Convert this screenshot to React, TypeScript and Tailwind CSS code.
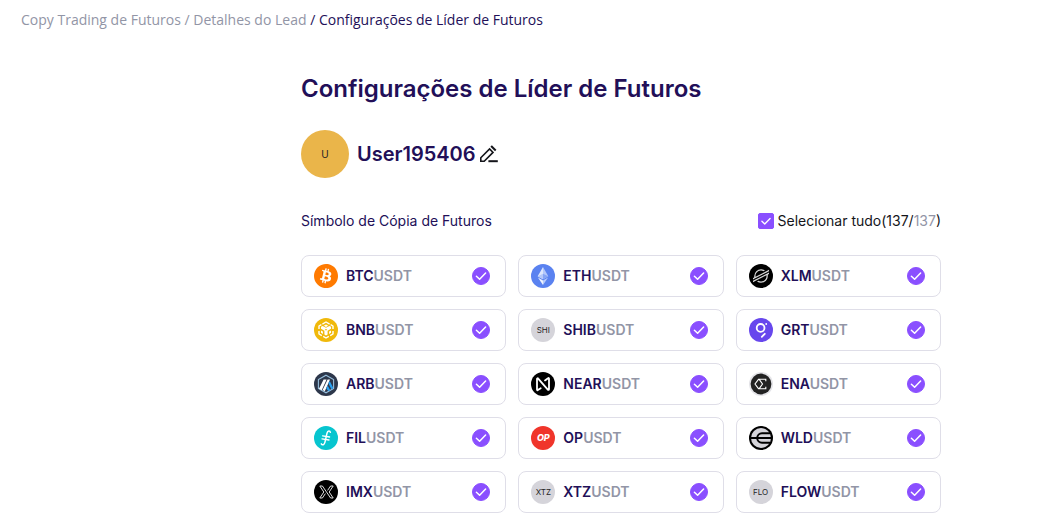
import React from "react";
import { SiBitcoin, SiStellar } from "react-icons/si";

interface CoinCardProps {
  base: string;
  icon: React.ReactNode;
}

interface DiscProps {
  color: string;
  children?: React.ReactNode;
}

function Disc({ color, children }: DiscProps) {
  return (
    <svg viewBox="0 0 24 24" className="size-6 shrink-0" fill="none" aria-hidden="true">
      <circle cx="12" cy="12" r="12" fill={color} />
      {children}
    </svg>
  );
}

// Coins without a logo show their first three letters
function TextDisc({ text }: { text: string }) {
  return (
    <span className="flex size-6 shrink-0 items-center justify-center rounded-full bg-[#d5d4da] text-[8px] text-[#1f1f26]">
      {text}
    </span>
  );
}

function BtcIcon() {
  return <SiBitcoin className="size-6 shrink-0 text-[#ff7a00]" />;
}

function EthIcon() {
  return (
    <Disc color="#5a82f0">
      <path d="M12 3 6.7 12.2 12 15.2Z" fill="#dce6fd" />
      <path d="M12 3 17.3 12.2 12 15.2Z" fill="#b4c8fa" />
      <path d="M12 9.8 6.7 12.2 12 15.2Z" fill="#b4c8fa" />
      <path d="M12 9.8 17.3 12.2 12 15.2Z" fill="#85a4f5" />
      <path d="M6.9 13.6 12 16.6V21Z" fill="#eef3fe" />
      <path d="M17.1 13.6 12 16.6V21Z" fill="#b9ccfa" />
    </Disc>
  );
}

function XlmIcon() {
  return (
    <span className="flex size-6 shrink-0 items-center justify-center rounded-full bg-black">
      <SiStellar className="size-4 text-[#d9d9d9]" />
    </span>
  );
}

function BnbIcon() {
  return (
    <Disc color="#f0b90b">
      <g stroke="#fff" strokeWidth="1.4" strokeLinejoin="round">
        <path d="m8.4 6.1 3.6-2.1 3.6 2.1M5 11V8l2.4-1.4M19 11V8l-2.4-1.4M5 13v3l2.8 1.6M19 13v3l-2.8 1.6M9.2 18.4l2.8 1.6 2.8-1.6" />
      </g>
      <path
        d="m12 6.4 2.2 1.3-2.2 1.2-2.2-1.2ZM7 8.8l1.6-.9L12 9.8l3.4-1.9 1.6.9v1.9l-3.4 2v3.8L12 17.5l-1.6-1v-3.8L7 10.7ZM7 12.4l1.9 1.1v2.4L7 14.8ZM17 12.4l-1.9 1.1v2.4l1.9-1.1Z"
        fill="#fff"
      />
      <path d="m12 11 1.3.8-1.3.8-1.3-.8Z" fill="#f0b90b" />
    </Disc>
  );
}

function GrtIcon() {
  return (
    <Disc color="#6747ed">
      <circle cx="11.6" cy="9.9" r="3.9" stroke="#fff" strokeWidth="1.8" />
      <path d="m15.8 15.8-3 3" stroke="#fff" strokeWidth="1.8" strokeLinecap="round" />
      <circle cx="17.2" cy="6" r=".9" fill="#fff" />
    </Disc>
  );
}

function ArbIcon() {
  return (
    <Disc color="#2d374b">
      <path d="m12 3.2 7.6 4.4v8.8L12 20.8l-7.6-4.4V7.6Z" stroke="#96bedc" strokeWidth="1.1" />
      <path d="M9.6 7.6h3L7.7 18.3 5 16.7ZM13.6 7.6h2.4L10.8 19.2l-2.2-1.1Z" fill="#fff" />
      <path d="m14.4 11.6 1.3-2.6 3.6 7.1-1.9 1.2ZM12.2 16.4l1.4-3 2.7 4.8-2 .9Z" fill="#28a0f0" />
    </Disc>
  );
}

function NearIcon() {
  return (
    <Disc color="#000">
      <path
        d="M9.7 16.2 6.9 18.1c-.5.3-.9 0-.9-.6V6.9c0-.7.8-.9 1.2-.3l9.6 11c.5.5 1.2.2 1.2-.4V6.6c0-.6-.5-.8-1-.4l-3 2.2"
        stroke="#fff"
        strokeWidth="1.8"
        strokeLinecap="round"
      />
    </Disc>
  );
}

function EnaIcon() {
  return (
    <Disc color="#e4e4e8">
      <circle cx="12" cy="12" r="10.4" fill="#222" />
      <path
        d="M16.8 9.2V7.3H9.5L6 12l3.5 4.7h7.3v-1.9M10.2 7.4l3.3 4.6-3.3 4.6"
        stroke="#fff"
        strokeWidth="1.1"
      />
    </Disc>
  );
}

function FilIcon() {
  return (
    <Disc color="#07c5cf">
      <path
        d="M16.4 6.3c-.4-1.8-2.6-2.2-3.4.9l-2.1 9.2c-.6 2.5-2.6 3.2-3.6 1.4"
        stroke="#fff"
        strokeWidth="1.5"
        strokeLinecap="round"
      />
      <path d="m8.6 9.8 7 1.2M8 12.8l7 1.2" stroke="#fff" strokeWidth="1.3" strokeLinecap="round" />
    </Disc>
  );
}

function OpIcon() {
  return (
    <span className="flex size-6 shrink-0 items-center justify-center rounded-full bg-[#f0352b] text-[9px] font-extrabold text-white italic">
      OP
    </span>
  );
}

function WldIcon() {
  return (
    <Disc color="#000">
      <circle cx="12" cy="12" r="10" fill="#d5d4da" />
      <path
        d="M21.4 7.2H13a4.8 4.8 0 0 0 0 9.6h8.4M2 12h20"
        stroke="#000"
        strokeWidth="2"
      />
    </Disc>
  );
}

function ImxIcon() {
  return (
    <Disc color="#000">
      <g stroke="#dcdcdc" strokeWidth="1">
        <path d="M5.8 6h2.6l8.2 12h2.6" />
        <path d="m5.8 6 4 6-4 6h2.6l3-4.4M19.2 18l-4-6 4-6h-2.6l-3 4.4" />
      </g>
    </Disc>
  );
}

const coins: CoinCardProps[] = [
  { base: "BTC", icon: <BtcIcon /> },
  { base: "ETH", icon: <EthIcon /> },
  { base: "XLM", icon: <XlmIcon /> },
  { base: "BNB", icon: <BnbIcon /> },
  { base: "SHIB", icon: <TextDisc text="SHI" /> },
  { base: "GRT", icon: <GrtIcon /> },
  { base: "ARB", icon: <ArbIcon /> },
  { base: "NEAR", icon: <NearIcon /> },
  { base: "ENA", icon: <EnaIcon /> },
  { base: "FIL", icon: <FilIcon /> },
  { base: "OP", icon: <OpIcon /> },
  { base: "WLD", icon: <WldIcon /> },
  { base: "IMX", icon: <ImxIcon /> },
  { base: "XTZ", icon: <TextDisc text="XTZ" /> },
  { base: "FLOW", icon: <TextDisc text="FLO" /> },
];

function Check({ className = "" }: { className?: string }) {
  return (
    <svg
      viewBox="0 0 18 18"
      className={`pointer-events-none col-start-1 row-start-1 ${className}`}
      fill="none"
      stroke="#fff"
      strokeWidth="1.5"
      strokeLinecap="round"
      strokeLinejoin="round"
      aria-hidden="true"
    >
      <path d="m4.4 9.2 3.2 3.1 6-6.2" />
    </svg>
  );
}

function CoinCard({ base, icon }: CoinCardProps) {
  return (
    <label className="flex h-[42px] cursor-pointer items-center gap-2 rounded-lg border border-[#dfdee8] pr-[15px] pl-3">
      {icon}
      <span className="flex-1 text-sm font-semibold text-[#220f58]">
        {base}
        <span className="text-[#9295a6]">USDT</span>
      </span>
      <span className="grid">
        <input
          type="checkbox"
          defaultChecked
          className="col-start-1 row-start-1 size-[18px] appearance-none rounded-full border border-[#8a4fff] checked:bg-[#8a4fff]"
        />
        <Check className="size-[18px]" />
      </span>
    </label>
  );
}

export default function App() {
  return (
    <div className="min-h-screen bg-white pb-2 font-['Inter',sans-serif] text-[#220f58]">
      <nav className="px-[21px] pt-[10px] font-['Open_Sans',sans-serif] text-sm text-[#9295a6]">
        <a href="#copy">Copy Trading de Futuros</a> / <a href="#lead">Detalhes do Lead</a>{" "}
        <span className="text-[#220f58]">/ Configurações de Líder de Futuros</span>
      </nav>

      <main className="pt-[43px] pr-[114px] pl-[301px]">
        <h1 className="text-2xl font-semibold">Configurações de Líder de Futuros</h1>

        <div className="mt-[25px] flex items-center">
          <div className="flex size-12 items-center justify-center rounded-full bg-[#eab54a] text-[10px] text-[#1f1f26]">
            U
          </div>
          <h2 className="ml-2 text-xl font-semibold">User195406</h2>
          <button aria-label="Editar nome" className="cursor-pointer">
            <svg viewBox="0 0 24 24" className="size-6" fill="none" stroke="#14151a" strokeWidth="1.6">
              <path d="M4.8 19.2v-3.4L13.6 7l3.4 3.4-8.8 8.8Z" />
              <path d="m14.4 4.7 1.5-1.4 4.5 4.5-1.4 1.4Z" fill="#14151a" stroke="none" />
              <path d="M12.4 19.2h9.4" strokeWidth="2" />
            </svg>
          </button>
        </div>

        <div className="mt-[33px] flex items-center justify-between">
          <h3 className="text-sm">Símbolo de Cópia de Futuros</h3>
          <label className="flex cursor-pointer items-center gap-1 text-sm text-[#14151a]">
            <span className="grid">
              <input
                type="checkbox"
                defaultChecked
                className="col-start-1 row-start-1 size-4 appearance-none rounded-xs border border-[#8a4fff] checked:bg-[#8a4fff]"
              />
              <Check className="size-4" />
            </span>
            <span>
              Selecionar tudo(137/<span className="text-[#9295a6]">137</span>)
            </span>
          </label>
        </div>

        <div className="mt-6 grid grid-cols-3 gap-3">
          {coins.map((coin) => (
            <CoinCard key={coin.base} base={coin.base} icon={coin.icon} />
          ))}
        </div>
      </main>
    </div>
  );
}
